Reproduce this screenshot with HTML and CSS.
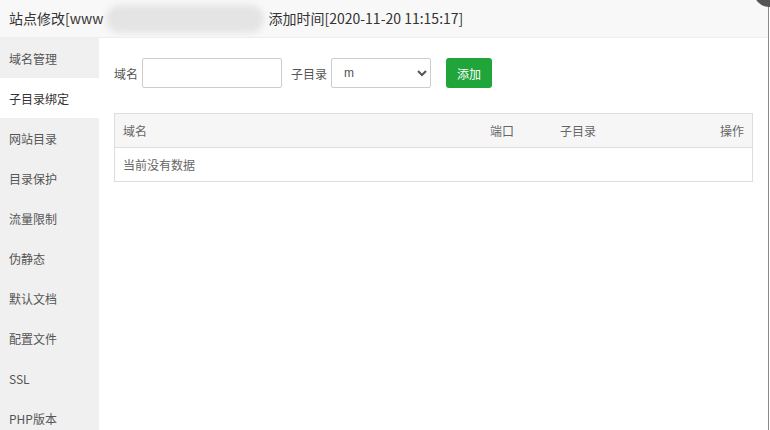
FILE: index.html
```html
<!DOCTYPE html>
<html lang="zh-CN">
<head>
    <meta charset="UTF-8">
    <meta name="viewport" content="width=device-width, initial-scale=1.0">
    <title>站点修改</title>
    <link rel="stylesheet" href="styles.css">
</head>
<body>

    <div class="layer">
        <div class="layer-title">
            <span>站点修改[www</span><span class="blur-mask"></span><span>添加时间[2020-11-20 11:15:17]</span>
        </div>
        <a class="layer-close" href="#"></a>

        <div class="layer-body">
            <ul class="tab-nav">
                <li>域名管理</li>
                <li class="on">子目录绑定</li>
                <li>网站目录</li>
                <li>目录保护</li>
                <li>流量限制</li>
                <li>伪静态</li>
                <li>默认文档</li>
                <li>配置文件</li>
                <li>SSL</li>
                <li>PHP版本</li>
            </ul>

            <div class="tab-con">
                <form class="bind-form">
                    <label for="domain">域名</label>
                    <input type="text" id="domain" class="bt-input domain-input">
                    <label for="dirName" class="gap">子目录</label>
                    <select id="dirName" class="bt-input dir-select">
                        <option>m</option>
                    </select>
                    <button type="button" class="btn-success">添加</button>
                </form>

                <table class="table">
                    <thead>
                        <tr>
                            <th class="col-domain">域名</th>
                            <th class="col-port">端口</th>
                            <th>子目录</th>
                            <th class="text-right">操作</th>
                        </tr>
                    </thead>
                    <tbody>
                        <tr>
                            <td colspan="4">当前没有数据</td>
                        </tr>
                    </tbody>
                </table>
            </div>
        </div>
    </div>

</body>
</html>
```

FILE: styles.css
```css
body {
    margin: 0;
    padding: 0;
    font-family: "Noto Sans CJK SC", "Liberation Sans", sans-serif;
    background-color: #fff;
    overflow: hidden;
}

.layer {
    position: relative;
    width: 768px;
    height: 430px;
    border-right: 1px solid #8a8a8a;
    background-color: #fff;
}

.layer-title {
    height: 37px;
    line-height: 37px;
    padding-left: 9px;
    font-size: 14px;
    color: #333;
    background-color: #f8f8f8;
    border-bottom: 1px solid #eee;
    white-space: nowrap;
    display: flex;
    align-items: center;
}

.blur-mask {
    display: inline-block;
    width: 158px;
    height: 28px;
    margin: 0 4px 0 3px;
    border-radius: 14px;
    background-color: #e4e4e4;
    filter: blur(3px);
}

.layer-close {
    position: absolute;
    top: -23px;
    right: -16px;
    width: 30px;
    height: 30px;
    border-radius: 50%;
    background-color: #555;
}

.layer-body {
    display: flex;
    height: 392px;
}

.tab-nav {
    width: 99px;
    margin: 0;
    padding: 0;
    list-style: none;
    background-color: #f0f0f0;
}

.tab-nav li {
    height: 40px;
    line-height: 41px;
    padding-left: 9px;
    font-size: 12px;
    color: #555;
}

.tab-nav li.on {
    background-color: #fff;
    color: #333;
}

.tab-con {
    flex: 1;
    padding: 20px 15px 0 15px;
}

.bind-form {
    display: flex;
    align-items: center;
    height: 30px;
    margin-bottom: 25px;
    font-size: 12px;
    color: #555;
}

.bind-form label {
    margin-right: 4px;
}

.bind-form .gap {
    margin-left: 9px;
}

.bt-input {
    height: 30px;
    border: 1px solid #ccc;
    border-radius: 2px;
    box-sizing: border-box;
    font-family: "Liberation Sans", sans-serif;
    font-size: 12px;
    color: #555;
    background-color: #fff;
}

.domain-input {
    width: 140px;
}

.dir-select {
    width: 100px;
    padding-left: 8px;
}

.btn-success {
    height: 30px;
    margin-left: 15px;
    padding: 0 11px;
    border: none;
    border-radius: 3px;
    background-color: #20a53a;
    color: #fff;
    font-family: "Noto Sans CJK SC", sans-serif;
    font-size: 12px;
}

.table {
    width: 100%;
    border-collapse: collapse;
    border: 1px solid #ddd;
    font-size: 12px;
    color: #666;
}

.table th,
.table td {
    height: 33px;
    padding: 0 8px;
    text-align: left;
    font-weight: normal;
    border-bottom: 1px solid #ddd;
}

.table th {
    background-color: #f6f6f6;
}

.table .col-domain {
    width: 351px;
}

.table .col-port {
    width: 54px;
}

.table .text-right {
    text-align: right;
}
```
